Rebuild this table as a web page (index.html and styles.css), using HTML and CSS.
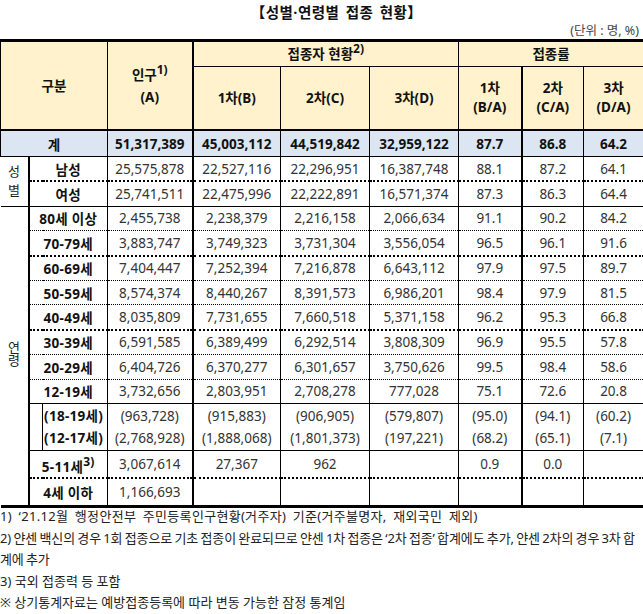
FILE: index.html
```html
<!DOCTYPE html>
<html lang="ko">
<head>
<meta charset="utf-8">
<title>성별·연령별 접종 현황</title>
<link rel="stylesheet" href="styles.css">
</head>
<body>
<div class="page">
  <h1 class="title">【성별·연령별 접종 현황】</h1>
  <div class="unit">(단위 : 명, %)</div>
  <table class="stat">
    <colgroup>
      <col class="c-side"><col class="c-sub"><col class="c-label">
      <col class="c-pop"><col class="c-d1"><col class="c-d2"><col class="c-d3">
      <col class="c-r1"><col class="c-r2"><col class="c-r3">
    </colgroup>
    <thead>
      <tr class="h1">
        <th colspan="3" rowspan="2" class="hd">구분</th>
        <th rowspan="2" class="hd vpop">인구<sup>1)</sup><br>(A)</th>
        <th colspan="3" class="hd vthick-l vthin-r">접종자 현황<sup>2)</sup></th>
        <th colspan="3" class="hd">접종률</th>
      </tr>
      <tr class="h2">
        <th class="hd vthick-l">1차(B)</th>
        <th class="hd">2차(C)</th>
        <th class="hd">3차(D)</th>
        <th class="hd two vmid-l">1차<br>(B/A)</th>
        <th class="hd two vthick-l">2차<br>(C/A)</th>
        <th class="hd two">3차<br>(D/A)</th>
      </tr>
    </thead>
    <tbody>
      <tr class="total">
        <td colspan="3" class="lbl">계</td>
        <td>51,317,389</td><td class="vthick-l">45,003,112</td><td>44,519,842</td><td>32,959,122</td>
        <td class="vmid-l">87.7</td><td class="vthick-l">86.8</td><td>64.2</td>
      </tr>
      <tr class="r b-tdot">
        <td rowspan="2" class="side sex">성<br>별</td>
        <td colspan="2" class="lbl">남성</td>
        <td>25,575,878</td><td class="vthick-l">22,527,116</td><td>22,296,951</td><td>16,387,748</td>
        <td class="vmid-l">88.1</td><td class="vthick-l">87.2</td><td>64.1</td>
      </tr>
      <tr class="r b-solid">
        <td colspan="2" class="lbl">여성</td>
        <td>25,741,511</td><td class="vthick-l">22,475,996</td><td>22,222,891</td><td>16,571,374</td>
        <td class="vmid-l">87.3</td><td class="vthick-l">86.3</td><td>64.4</td>
      </tr>
      <tr class="r b-dot">
        <td rowspan="12" class="side age"><span class="rot">연령</span></td>
        <td colspan="2" class="lbl">80세 이상</td>
        <td>2,455,738</td><td class="vthick-l">2,238,379</td><td>2,216,158</td><td>2,066,634</td>
        <td class="vmid-l">91.1</td><td class="vthick-l">90.2</td><td>84.2</td>
      </tr>
      <tr class="r b-tdot">
        <td colspan="2" class="lbl">70-79세</td>
        <td>3,883,747</td><td class="vthick-l">3,749,323</td><td>3,731,304</td><td>3,556,054</td>
        <td class="vmid-l">96.5</td><td class="vthick-l">96.1</td><td>91.6</td>
      </tr>
      <tr class="r b-dot">
        <td colspan="2" class="lbl">60-69세</td>
        <td>7,404,447</td><td class="vthick-l">7,252,394</td><td>7,216,878</td><td>6,643,112</td>
        <td class="vmid-l">97.9</td><td class="vthick-l">97.5</td><td>89.7</td>
      </tr>
      <tr class="r b-dot">
        <td colspan="2" class="lbl">50-59세</td>
        <td>8,574,374</td><td class="vthick-l">8,440,267</td><td>8,391,573</td><td>6,986,201</td>
        <td class="vmid-l">98.4</td><td class="vthick-l">97.9</td><td>81.5</td>
      </tr>
      <tr class="r b-tdot">
        <td colspan="2" class="lbl">40-49세</td>
        <td>8,035,809</td><td class="vthick-l">7,731,655</td><td>7,660,518</td><td>5,371,158</td>
        <td class="vmid-l">96.2</td><td class="vthick-l">95.3</td><td>66.8</td>
      </tr>
      <tr class="r b-dot">
        <td colspan="2" class="lbl">30-39세</td>
        <td>6,591,585</td><td class="vthick-l">6,389,499</td><td>6,292,514</td><td>3,808,309</td>
        <td class="vmid-l">96.9</td><td class="vthick-l">95.5</td><td>57.8</td>
      </tr>
      <tr class="r b-dot">
        <td colspan="2" class="lbl">20-29세</td>
        <td>6,404,726</td><td class="vthick-l">6,370,277</td><td>6,301,657</td><td>3,750,626</td>
        <td class="vmid-l">99.5</td><td class="vthick-l">98.4</td><td>58.6</td>
      </tr>
      <tr class="r b-solid">
        <td colspan="2" class="lbl">12-19세</td>
        <td>3,732,656</td><td class="vthick-l">2,803,951</td><td>2,708,278</td><td>777,028</td>
        <td class="vmid-l">75.1</td><td class="vthick-l">72.6</td><td>20.8</td>
      </tr>
      <tr class="r sub b-solid">
        <td class="subgap"></td>
        <td class="lbl left">(18-19세)<br>(12-17세)</td>
        <td>(963,728)<br>(2,768,928)</td><td class="vthick-l">(915,883)<br>(1,888,068)</td><td>(906,905)<br>(1,801,373)</td><td>(579,807)<br>(197,221)</td>
        <td class="vmid-l">(95.0)<br>(68.2)</td><td class="vthick-l">(94.1)<br>(65.1)</td><td>(60.2)<br>(7.1)</td>
      </tr>
      <tr class="r r23 b-tdot">
        <td colspan="2" class="lbl low">5-11세<sup>3)</sup></td>
        <td>3,067,614</td><td class="vthick-l">27,367</td><td>962</td><td></td>
        <td class="vmid-l">0.9</td><td class="vthick-l">0.0</td><td></td>
      </tr>
      <tr class="r r27 last">
        <td colspan="2" class="lbl">4세 이하</td>
        <td>1,166,693</td><td class="vthick-l"></td><td></td><td></td>
        <td class="vmid-l"></td><td class="vthick-l"></td><td></td>
      </tr>
    </tbody>
  </table>
  <div class="notes">
    <p class="note n1">1) ‘21.12월 행정안전부 주민등록인구현황(거주자) 기준(거주불명자, 재외국민 제외)</p>
    <p class="note tight">2) 얀센 백신의 경우 1회 접종으로 기초 접종이 완료되므로 얀센 1차 접종은 ‘2차 접종’ 합계에도 추가, 얀센 2차의 경우 3차 합</p>
    <p class="note tight">계에 추가</p>
    <p class="note">3) 국외 접종력 등 포함</p>
    <p class="note">※ 상기통계자료는 예방접종등록에 따라 변동 가능한 잠정 통계임</p>
  </div>
</div>
</body>
</html>
```

FILE: styles.css
```css
html, body {
  margin: 0;
  padding: 0;
  background: #ffffff;
}

body {
  font-family: "Noto Sans", "Noto Sans CJK KR", sans-serif;
  color: #222;
  width: 643px;
  overflow: hidden;
}

.page {
  width: 643px;
}

.title {
  margin: 0;
  height: 22px;
  line-height: 22px;
  padding-top: 1px;
  padding-left: 30px;
  font-size: 14.5px;
  font-weight: 700;
  text-align: center;
  letter-spacing: 0.5px;
  word-spacing: 2px;
  color: #111;
}

.unit {
  height: 16px;
  line-height: 16px;
  font-size: 12.5px;
  text-align: right;
  padding-right: 4px;
  color: #444;
}

.stat {
  border-collapse: collapse;
  table-layout: fixed;
  width: 643px;
  font-size: 13.5px;
  color: #333;
}

.c-side { width: 28px; }
.c-sub { width: 14px; }
.c-label { width: 65px; }
.c-pop { width: 85px; }
.c-d1 { width: 88px; }
.c-d2 { width: 89px; }
.c-d3 { width: 89px; }
.c-r1 { width: 63px; }
.c-r2 { width: 62px; }
.c-r3 { width: 60px; }

.stat th,
.stat td {
  padding: 0;
  text-align: center;
  vertical-align: middle;
  border-left: 1px solid #000;
  border-right: 1px solid #000;
  white-space: nowrap;
  overflow: hidden;
}

.stat sup {
  font-size: 12px;
  line-height: 0;
  vertical-align: 6px;
}

/* header */
.hd {
  background: #fff2cc;
  font-weight: 700;
  color: #111;
}

.h1 th {
  border-top: 3px solid #000;
  border-bottom: 1px solid #000;
  height: 24px;
  line-height: 18px;
}

.h1 th[rowspan] {
  border-bottom: 2px solid #000;
  line-height: 22px;
}

.h2 th {
  height: 62px;
  border-bottom: 2px solid #000;
  line-height: 20px;
}

.h2 th.two {
  line-height: 19px;
}

.vpop {
  padding-top: 2px;
}

.vthick-l { border-left: 2px solid #000 !important; }
.vmid-l { border-left: 1px solid #000; }
.vthin-r { border-right: 1px solid #000; }

/* total row */
.total td {
  background: #dce6f2;
  font-weight: 700;
  color: #111;
  height: 25px;
  border-bottom: 1px solid #000;
}

/* body rows */
.r td { height: 23.4px; }
.r.r23 td { height: 22px; }
.r.r27 td { height: 25.5px; }

.b-dot td { border-bottom: 1px dotted #000; }
.b-tdot td { border-bottom: 2px dotted #000; }
.b-solid td { border-bottom: 1px solid #000; }
.last td { border-bottom: 3px solid #000; }

.lbl {
  font-weight: 700;
  color: #111;
  letter-spacing: 0.3px;
}

.lbl.left {
  text-align: left;
  padding-left: 1px;
}

.lbl.low {
  padding-top: 4px;
}

.sub td {
  height: 46.5px;
  line-height: 22px;
}

.subgap {
  border-right: 1px solid #000;
}

.side {
  border-right: 2px solid #000 !important;
  border-left: none !important;
  font-size: 13px;
  font-weight: 400;
  color: #222;
}

.side.sex {
  line-height: 19px;
  border-bottom: 1px solid #000 !important;
}

.side.age {
  border-bottom: 3px solid #000 !important;
}

.rot {
  display: inline-block;
  writing-mode: vertical-rl;
  letter-spacing: 0;
}

/* notes */
.notes {
  margin-top: -3px;
}

.note {
  margin: 0;
  font-size: 13px;
  line-height: 21.5px;
  white-space: nowrap;
  color: #222;
}

.note.n1 {
  line-height: 23px;
  letter-spacing: 0.3px;
  word-spacing: 3px;
}

.note.tight {
  letter-spacing: -0.1px;
  word-spacing: -1px;
}
```
